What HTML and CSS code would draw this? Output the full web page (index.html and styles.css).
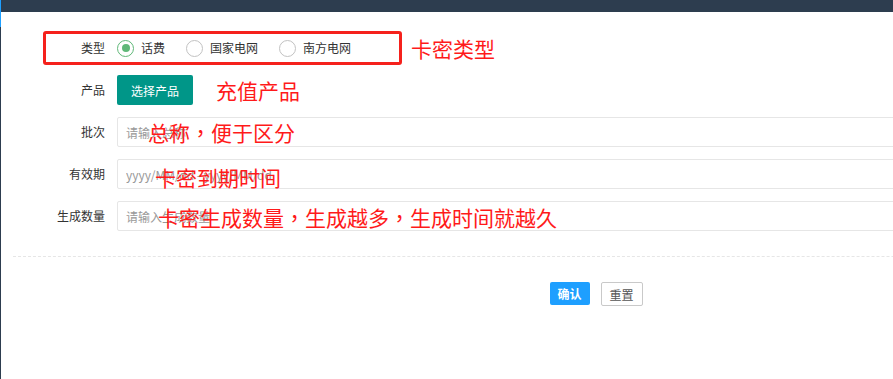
FILE: index.html
```html
<!DOCTYPE html>
<html lang="zh-CN">
<head>
    <meta charset="UTF-8">
    <meta name="viewport" content="width=device-width, initial-scale=1.0">
    <title>生成卡密</title>
    <link rel="stylesheet" href="styles.css">
</head>
<body>
    <div class="side"></div>
    <div class="content">
        <div class="topbar"></div>

        <form class="card-form">
            <!-- 类型 -->
            <div class="form-row">
                <span class="mark-box"></span>
                <label class="form-label">类型</label>
                <div class="radio-group">
                    <span class="radio checked"><i class="radio-icon"></i>话费</span>
                    <span class="radio"><i class="radio-icon"></i>国家电网</span>
                    <span class="radio"><i class="radio-icon"></i>南方电网</span>
                </div>
                <span class="note note-type">卡密类型</span>
            </div>

            <!-- 产品 -->
            <div class="form-row">
                <label class="form-label">产品</label>
                <button type="button" class="btn btn-green">选择产品</button>
                <span class="note note-product">充值产品</span>
            </div>

            <div class="form-row">
                <label class="form-label">批次</label>
                <input class="form-input" type="text" placeholder="请输入总称">
                <span class="note note-batch">总称<span class="comma" lang="zh-TW">，</span>便于区分</span>
            </div>

            <div class="form-row">
                <label class="form-label">有效期</label>
                <input class="form-input" type="text" placeholder="yyyy/MM/dd - yyyy/MM/dd">
                <span class="note note-date">卡密到期时间</span>
            </div>

            <div class="form-row">
                <label class="form-label">生成数量</label>
                <input class="form-input" type="text" placeholder="请输入生成数量">
                <span class="note note-count">卡密生成数量<span class="comma" lang="zh-TW">，</span>生成越多<span class="comma" lang="zh-TW">，</span>生成时间就越久</span>
            </div>

            <div class="form-actions">
                <button type="button" class="btn btn-blue">确认</button>
                <button type="reset" class="btn btn-plain">重置</button>
            </div>
        </form>
    </div>
</body>
</html>
```

FILE: styles.css
```css
/* base */
html, body {
    margin: 0;
    padding: 0;
    width: 893px;
    height: 379px;
    overflow: hidden;
    background: #fff;
}

body {
    display: flex;
    font-family: "Noto Sans CJK SC", "Liberation Sans", sans-serif;
    font-size: 12px;
    color: #333;
}

/* thin left strip of the admin frame */
.side {
    width: 1px;
    flex: none;
    background: linear-gradient(#1e9fff 27px, #2d3d4f 27px);
}

.content {
    flex: 1;
    min-width: 0;
    overflow: hidden;
}

.topbar {
    height: 12px;
    background: #2d3d4f;
}

.card-form {
    width: 1166px;
    margin: 21px 0 0 12px;
}

.form-row {
    position: relative;
    display: flex;
    align-items: center;
    height: 30px;
    margin-bottom: 12px;
}

.form-label {
    width: 92px;
    padding-right: 12px;
    flex: none;
    text-align: right;
    line-height: 30px;
    color: #333;
}

/* radios */
.radio-group {
    display: flex;
    align-items: center;
    gap: 21px;
}

.radio {
    display: flex;
    align-items: center;
    gap: 7px;
    line-height: 18px;
}

.radio-icon {
    box-sizing: border-box;
    width: 17px;
    height: 17px;
    border: 1px solid #c2c2c2;
    border-radius: 50%;
    position: relative;
}

.radio.checked .radio-icon {
    border-color: #5fb878;
}

.radio.checked .radio-icon::after {
    content: "";
    position: absolute;
    left: 3.5px;
    top: 3.5px;
    width: 8px;
    height: 8px;
    border-radius: 50%;
    background: #5fb878;
}

/* inputs */
.form-input {
    box-sizing: border-box;
    flex: 1;
    height: 30px;
    padding: 0 8px;
    border: 1px solid #e6e6e6;
    border-radius: 2px;
    font-family: inherit;
    font-size: 12px;
    color: #333;
    outline: none;
}

.form-input::placeholder {
    color: #999;
}

/* buttons */
.btn {
    font-family: inherit;
    font-size: 12px;
    border-radius: 2px;
    cursor: pointer;
}

.btn-green {
    width: 76px;
    height: 30px;
    border: none;
    background: #009688;
    color: #fff;
}

.form-actions {
    display: flex;
    justify-content: center;
    gap: 11px;
    margin-top: 25px;
    padding-top: 25px;
    border-top: 1px dashed #e6e6e6;
}

.btn-blue {
    width: 40px;
    height: 23px;
    padding: 0;
    border: none;
    background: #1e9fff;
    color: #fff;
    font-weight: bold;
}

.btn-plain {
    width: 42px;
    height: 24px;
    padding: 0;
    border: 1px solid #c9c9c9;
    background: #fff;
    color: #555;
}

/* red annotations drawn over the form */
.mark-box {
    position: absolute;
    left: 30px;
    top: -2px;
    width: 359px;
    height: 34px;
    box-sizing: border-box;
    border: 3px solid #f5211c;
    border-radius: 3px;
}

.note {
    position: absolute;
    font-size: 21px;
    line-height: 24px;
    color: #ff1a1a;
    white-space: nowrap;
}

/* centred full-width comma, as in the screenshot */
.comma {
    font-family: "Noto Sans CJK TC", "Noto Sans CJK SC", sans-serif;
}

.note-type { left: 398px; top: 3px; }
.note-product { left: 203px; top: 3px; }
.note-batch { left: 135px; top: 3px; }
.note-date { left: 142px; top: 6px; }
.note-count { left: 145px; top: 4px; }
```
